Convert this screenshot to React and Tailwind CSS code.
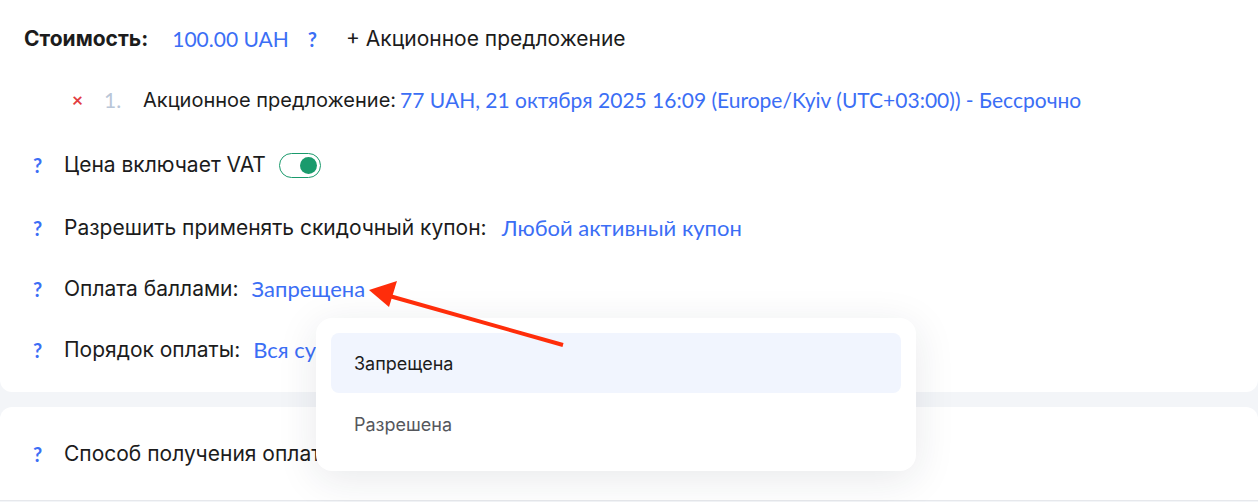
import React from "react";

const blue = "text-[#3b6ef5] font-['Lato'] text-[21px]";
const blueLg = "text-[#3b6ef5] font-['Lato'] text-[22px] leading-[28px]";
const label = "font-['Inter'] text-[21px]";

function Help() {
  return <span className="w-[31px] font-['Lato'] text-[20px] font-bold text-[#3b6ef5]">?</span>;
}

function Toggle() {
  return (
    <span className="ml-[13px] inline-flex h-[25px] w-[42px] items-center justify-end rounded-full border-[1.5px] border-[#1a9a6c] bg-white pr-[3px]">
      <span className="h-[17px] w-[17px] rounded-full bg-[#1a9a6c]" />
    </span>
  );
}

export default function App() {
  return (
    <div
      className="relative h-[502px] w-[1258px] overflow-hidden bg-[#f3f5f8] text-[#1c1c1c]"
      style={{ fontFamily: "Inter, Lato, sans-serif" }}
    >
      <div className="rounded-b-xl bg-white pb-[14px] pl-6 pt-2">
        <div className="flex h-[62px] items-center">
          <span className={`${label} font-bold`}>Стоимость:</span>
          <span className={`ml-[24px] ${blue}`}>100.00 UAH</span>
          <span className="ml-[19px] font-['Lato'] text-[20px] font-bold text-[#3b6ef5]">?</span>
          <span className={`ml-[29px] ${label}`}>+ Акционное предложение</span>
        </div>
        <div className="flex h-[60px] items-center pl-[48px]">
          <span className="w-[32px] font-['Lato'] text-[19px] font-bold text-[#e23b40]">×</span>
          <span className="w-[39px] font-['Lato'] text-[21px] text-[#b9c6d8]">1.</span>
          <span className="font-['Inter'] text-[20px]">Акционное предложение:</span>
          <span className={`ml-[4px] ${blue}`}>
            77 UAH, 21 октября 2025 16:09 (Europe/Kyiv (UTC+03:00)) - Бессрочно
          </span>
        </div>
        <div className="flex h-[70px] items-center pl-[9px]">
          <Help />
          <span className={label}>Цена включает VAT</span>
          <Toggle />
        </div>
        <div className="flex h-[56px] items-center pl-[9px]">
          <Help />
          <span className={label}>Разрешить применять скидочный купон:</span>
          <span className={`ml-[15px] ${blueLg}`}>Любой активный купон</span>
        </div>
        <div className="flex h-[66px] items-center pl-[9px]">
          <Help />
          <span className={label}>Оплата баллами:</span>
          <span className={`ml-[13px] ${blueLg}`}>Запрещена</span>
        </div>
        <div className="flex h-[56px] items-center pl-[9px]">
          <Help />
          <span className={label}>Порядок оплаты:</span>
          <span className={`ml-[13px] ${blueLg}`}>Вся сумма</span>
        </div>
      </div>

      <div className="mt-[15px] h-[94px] rounded-t-xl border-b border-[#e6e8ec] bg-white pl-[33px]">
        <div className="flex h-full items-center">
          <Help />
          <span className={label}>Способ получения оплаты</span>
        </div>
      </div>

      <div className="absolute left-[316px] top-[318px] w-[600px] rounded-2xl bg-white p-[15px] shadow-[0_8px_40px_rgba(30,40,60,0.10)]">
        <div className="flex h-[60px] items-center rounded-lg bg-[#f1f5fe] pl-[23px] font-['Inter'] text-[18px] text-[#1c1c1c]">
          Запрещена
        </div>
        <div className="flex h-[63px] items-center pl-[23px] font-['Inter'] text-[18px] text-[#55575c]">
          Разрешена
        </div>
      </div>

      <svg
        className="absolute left-0 top-0"
        width="1258"
        height="502"
        viewBox="0 0 1258 502"
      >
        <line x1="563" y1="345" x2="386" y2="295" stroke="#ff2d0a" strokeWidth="4" />
        <polygon points="369,290 397,281 389,307" fill="#ff2d0a" />
      </svg>
    </div>
  );
}
